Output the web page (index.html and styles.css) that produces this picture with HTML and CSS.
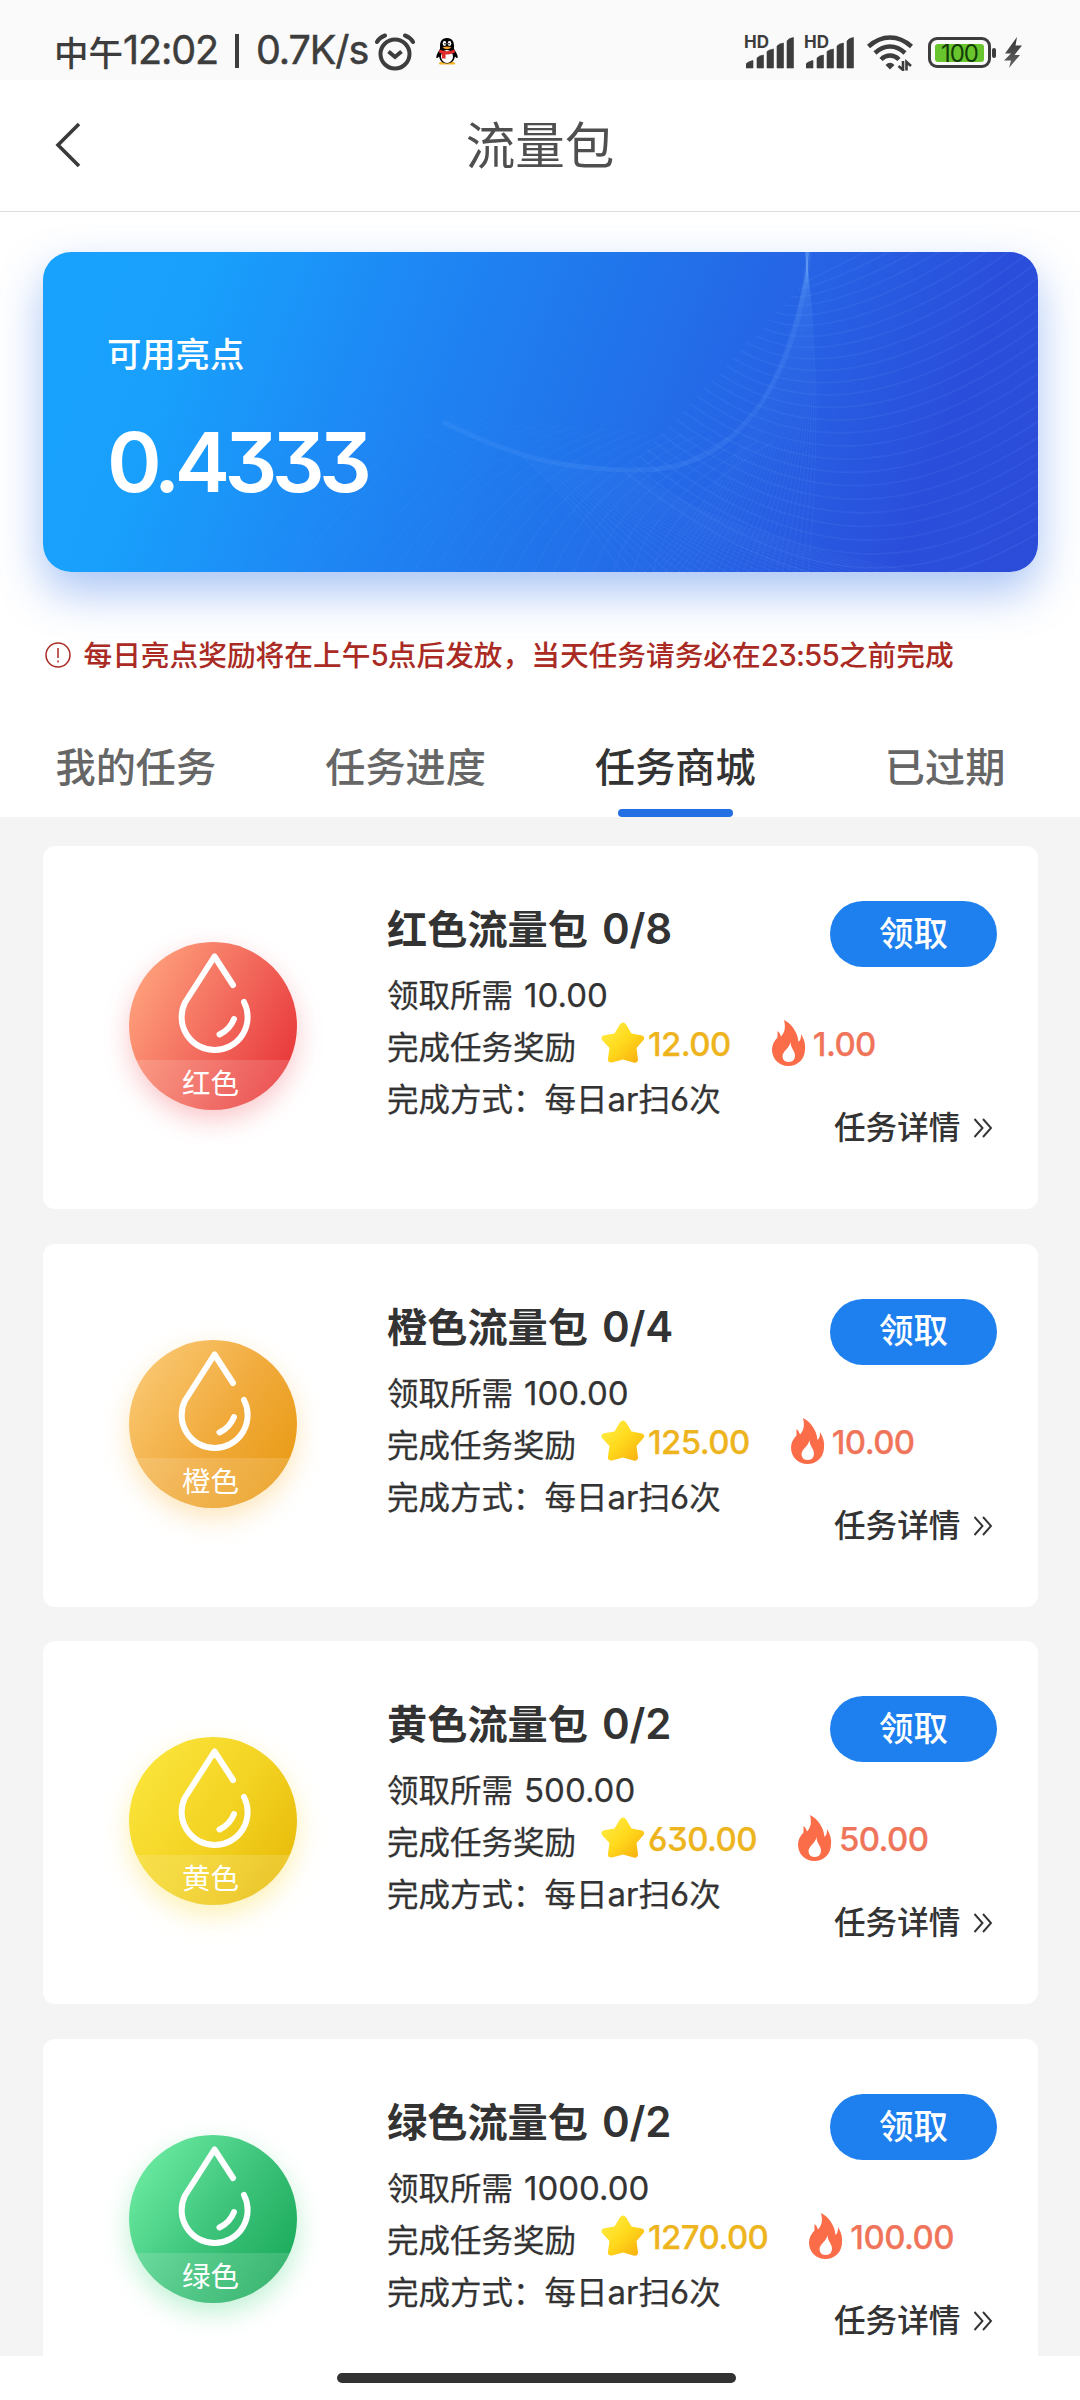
FILE: index.html
```html
<!DOCTYPE html>
<html lang="zh-CN">
<head>
<meta charset="utf-8">
<title>流量包</title>
<link rel="stylesheet" href="styles.css">
</head>
<body>
<svg class="defs" aria-hidden="true">
  <defs>
    <linearGradient id="starFill" x1="0" y1="0" x2="1" y2="1">
      <stop offset="0" stop-color="#fff04a"/><stop offset=".5" stop-color="#ffd91c"/><stop offset="1" stop-color="#f8a90c"/>
    </linearGradient>
    <linearGradient id="boltFill" x1="0" y1="0" x2="0" y2="1">
      <stop offset="0" stop-color="#333"/><stop offset="1" stop-color="#666"/>
    </linearGradient>
    <symbol id="drop" viewBox="0 0 168 168">
      <path d="M104 43 85.5 14.500 56 60.500A33 33 0 1 0 115 60M105 77Q101 87.500 90.500 92.500" fill="none" stroke="#fff" stroke-width="6" stroke-linecap="round" stroke-linejoin="round"/>
    </symbol>
    <symbol id="star" viewBox="0 0 44 42">
      <path d="M19 2.200Q22 -1.200 25 2.200L30.500 11.500 41 13.500Q44.500 15 42.500 18L35.500 26 37 37.500Q36.500 41.500 32.500 40.500L22 37.500 11 40.500Q6.500 41 7 36.500L8.500 26 1 18Q-.8 14.500 3 13.300L13.500 11.500Z" fill="url(#starFill)"/>
    </symbol>
    <symbol id="fire" viewBox="0 0 34 46">
      <path d="M12 0C20 4 26 13 26.500 22Q29.500 19 29 14Q34 22 33 30C32.500 40 25 46 16.500 46C7 46 0 39 0 29.500Q0 23 5.500 17.500V11Q8.500 13 9 16.500C13.500 12 13.500 6 12 0ZM18.500 22C17 29 10.500 31 10.500 36.500Q11 42 17 42Q23 41.500 23 35.500C23 31 18.500 28 18.500 22Z" fill="#fb6c48" fill-rule="evenodd"/>
    </symbol>
    <symbol id="more" viewBox="0 0 20 20">
      <path d="M1.500 1 9.500 10 1.500 19M10 1 18 10 10 19" fill="none" stroke="#333" stroke-width="1.900"/>
    </symbol>
    <symbol id="signal" viewBox="0 0 48 32">
      <path d="M0 31V27Q2 24.500 7 23.500V31ZM11 31V21Q13 18.500 17.500 18V31ZM21 31V14.500Q23 12.500 27.500 12V31ZM31 31V9Q33 6.500 37.500 6V31ZM41 31V4Q42.500 1 47.500.5V31Z" fill="#3d3d3d" stroke="#3d3d3d" stroke-width=".6" stroke-linejoin="round"/>
    </symbol>
  </defs>
</svg>

<div class="status">
  <span class="clock">中午<span class="lat">12:02</span><i class="bar"></i><span class="lat">0.7K/s</span></span>
  <svg class="alarm" viewBox="0 0 40 38" fill="none" stroke="#3d3d3d"><circle cx="20" cy="21" r="14.500" stroke-width="4"/><path d="M2 9Q4.500 4.500 10 2.500M30 2.500Q35.500 4.500 38 9" stroke-width="4" stroke-linecap="round"/><path d="M13.500 18.500 20 24 26.500 18.500" stroke-width="4"/></svg>
  <svg class="qq" viewBox="0 0 22 27"><path d="M3 25Q5 23 11 24.500Q17 23 19 25Q20 27 14 26.500H8Q2 27 3 25Z" fill="#f7b52c"/><path d="M11 0C5.500 0 4 4 4 8V11Q0 17 .3 19.500Q1 21 3 18.500Q4.500 25.500 11 25.500T19 18.500Q21 21 21.700 19.500Q22 17 18 11V8C18 4 16.500 0 11 0Z"/><ellipse cx="11" cy="18.500" rx="6" ry="6.500" fill="#fff"/><ellipse cx="8.500" cy="5.500" rx="1.800" ry="2.400" fill="#fff"/><ellipse cx="13.500" cy="5.500" rx="1.800" ry="2.400" fill="#fff"/><circle cx="9" cy="5.800" r=".8"/><circle cx="13" cy="5.800" r=".8"/><path d="M6.500 9.500Q11 7.500 15.500 9.500Q11 13 6.500 9.500Z" fill="#f6a52b"/><path d="M3.500 11.500Q11 15 18.500 11.500L19 14.500Q14.500 17 9.500 16.500V20.500H6V15.800L3 14.500Z" fill="#df2b2b"/></svg>
  <span class="cell"><b>HD</b><svg class="sig"><use href="#signal"/></svg></span>
  <span class="cell"><b>HD</b><svg class="sig"><use href="#signal"/></svg></span>
  <svg class="wifi" viewBox="0 0 46 36" fill="none" stroke="#3d3d3d" stroke-width="4.500"><path d="M1.500 11.500Q11.500 2.500 23 2.500T44.500 11.500M8 18Q15 11.500 23 11.500T38 18M14 24.500Q18 20.500 23 20.500T32 24.500"/><path d="M18.500 30Q23 25.500 27.500 30L23 34.500Z" fill="#3d3d3d" stroke="none"/><path d="M36 26V35L31.500 31M39.500 35.500V27L44 31" stroke-width="2.600"/></svg>
  <span class="battery"><span>100</span></span>
  <svg class="bolt" viewBox="0 0 18 31"><path d="M13 0 1 16.500H7L0 23.500H7L5 31 16 18H10.500L18 8.500H11.500Z" fill="url(#boltFill)"/></svg>
</div>

<header class="nav">
  <svg class="back" viewBox="0 0 26 46"><path d="M24 2 3 23 24 44" fill="none" stroke="#3a3a3a" stroke-width="3.600"/></svg>
  <h1>流量包</h1>
</header>

<section class="top">
  <div class="hero">
    <svg class="waves" viewBox="0 0 995 320"><g id="waves" fill="none" stroke="#7fb4ff"></g></svg>
    <p class="hero-label">可用亮点</p>
    <p class="hero-value">0.4333</p>
  </div>
  <p class="notice">
    <svg viewBox="0 0 26 26" fill="none" stroke="#a92b24" stroke-width="1.500"><circle cx="13" cy="13" r="12"/><path d="M13 6V16M13 18.500V20.500"/></svg>
    <span>每日亮点奖励将在上午<span class="lat">5</span>点后发放，当天任务请务必在<span class="lat">23:55</span>之前完成</span>
  </p>
  <nav class="tabs">
    <a>我的任务</a><a>任务进度</a><a class="on">任务商城</a><a>已过期</a>
  </nav>
</section>

<main class="list">
  <article class="card">
    <div class="badge red"><svg><use href="#drop"/></svg><span>红色</span></div>
    <div class="info">
      <h2>红色流量包 <span class="lat">0/8</span></h2>
      <p>领取所需 <span class="lat need">10.00</span></p>
      <p class="reward">完成任务奖励<svg class="star"><use href="#star"/></svg><span class="lat gold">12.00</span><svg class="fire"><use href="#fire"/></svg><span class="lat flame">1.00</span></p>
      <p>完成方式：每日<span class="lat">ar</span>扫<span class="lat">6</span>次</p>
    </div>
    <div class="side"><button>领取</button><a>任务详情<svg><use href="#more"/></svg></a></div>
  </article>
  <article class="card">
    <div class="badge orange"><svg><use href="#drop"/></svg><span>橙色</span></div>
    <div class="info">
      <h2>橙色流量包 <span class="lat">0/4</span></h2>
      <p>领取所需 <span class="lat need">100.00</span></p>
      <p class="reward">完成任务奖励<svg class="star"><use href="#star"/></svg><span class="lat gold">125.00</span><svg class="fire"><use href="#fire"/></svg><span class="lat flame">10.00</span></p>
      <p>完成方式：每日<span class="lat">ar</span>扫<span class="lat">6</span>次</p>
    </div>
    <div class="side"><button>领取</button><a>任务详情<svg><use href="#more"/></svg></a></div>
  </article>
  <article class="card">
    <div class="badge yellow"><svg><use href="#drop"/></svg><span>黄色</span></div>
    <div class="info">
      <h2>黄色流量包 <span class="lat">0/2</span></h2>
      <p>领取所需 <span class="lat need">500.00</span></p>
      <p class="reward">完成任务奖励<svg class="star"><use href="#star"/></svg><span class="lat gold">630.00</span><svg class="fire"><use href="#fire"/></svg><span class="lat flame">50.00</span></p>
      <p>完成方式：每日<span class="lat">ar</span>扫<span class="lat">6</span>次</p>
    </div>
    <div class="side"><button>领取</button><a>任务详情<svg><use href="#more"/></svg></a></div>
  </article>
  <article class="card">
    <div class="badge green"><svg><use href="#drop"/></svg><span>绿色</span></div>
    <div class="info">
      <h2>绿色流量包 <span class="lat">0/2</span></h2>
      <p>领取所需 <span class="lat need">1000.00</span></p>
      <p class="reward">完成任务奖励<svg class="star"><use href="#star"/></svg><span class="lat gold">1270.00</span><svg class="fire"><use href="#fire"/></svg><span class="lat flame">100.00</span></p>
      <p>完成方式：每日<span class="lat">ar</span>扫<span class="lat">6</span>次</p>
    </div>
    <div class="side"><button>领取</button><a>任务详情<svg><use href="#more"/></svg></a></div>
  </article>
</main>
<footer class="home"><i></i></footer>
<script src="waves.js"></script>
</body>
</html>
```
FILE: styles.css
```css
* { box-sizing: border-box; margin: 0; padding: 0; }
html, body { width: 1080px; height: 2400px; overflow: hidden; }
body {
  display: flex; flex-direction: column; background: #fff; color: #333;
  font-family: "Noto Sans CJK SC", sans-serif; font-weight: 400;
}
.defs { position: absolute; width: 0; height: 0; }
svg { display: block; flex: none; }
.lat { font-family: Inter, sans-serif; font-feature-settings: "cv09", "cv03"; font-size: 1.07em; line-height: 1; }

.status { height: 80px; flex: none; display: flex; align-items: flex-start; padding: 33px 58px 0 54px; background: #fafafa; color: #3d3d3d; }
.clock { display: flex; align-items: center; width: 321px; height: 36px; font-size: 34.500px; line-height: 36px; white-space: nowrap; font-weight: 500; }
.clock .lat { font-size: 39.500px; font-weight: 400; letter-spacing: -1.100px; -webkit-text-stroke: .5px #3d3d3d; }
.bar { width: 4px; height: 34px; margin: 0 17px; background: #3d3d3d; }
.alarm { width: 40px; height: 38px; }
.qq { width: 22px; height: 27px; margin: 5px 286px 0 21px; }
.cell { position: relative; width: 60px; height: 38px; padding: 4px 0 0 2px; }
.cell b { position: absolute; left: 0; top: 1px; font: 700 17px/17px Inter, sans-serif; }
.sig { width: 48px; height: 32px; }
.wifi { width: 46px; height: 36px; margin: 2px 15px 0 3px; }
.battery { position: relative; width: 63px; height: 31px; margin-top: 4px; padding: 4px 5px; border: 3px solid #3d3d3d; border-radius: 9px; }
.battery::after { content: ""; position: absolute; left: 61px; top: 8px; width: 4px; height: 10px; border-radius: 2px; background: #3d3d3d; }
.battery span { display: block; height: 18px; margin: -.5px -1px; border-radius: 3px; background: #68c52d; color: #123c08; font: 400 24px/19px Inter, sans-serif; letter-spacing: -1px; text-align: center; }
.bolt { width: 18px; height: 31px; margin: 4px 0 0 13px; }

.nav { position: relative; height: 132px; flex: none; display: flex; align-items: center; justify-content: center; padding-bottom: 5px; border-bottom: 1px solid #dedede; }
.back { position: absolute; left: 55px; top: 42px; width: 26px; height: 46px; }
.nav h1 { font-size: 49.500px; line-height: 60px; font-weight: 400; color: #4f4f4f; }

.top { height: 605px; flex: none; display: flex; flex-direction: column; padding: 40px 0 0; }
.hero { position: relative; width: 995px; height: 320px; margin-left: 43px; padding: 75px 64px 0; border-radius: 28px; color: #fff;
  background: linear-gradient(110deg, #18a1fd 0%, #18a0fc 15%, #1e87f4 35%, #2174eb 54%, #2663e5 70%, #2a4edb 87%, #2b4cd9 100%);
  box-shadow: 0 20px 46px rgba(50, 115, 230, .42); }
.waves { position: absolute; inset: 0; width: 995px; height: 320px; border-radius: 28px; }
.hero-label { position: relative; font-size: 34.300px; line-height: 50px; font-weight: 500; }
.hero-value { position: relative; margin-top: 35px; font: 600 83px/100px Inter, sans-serif; font-feature-settings: "cv09"; letter-spacing: -5.600px; }
.notice { display: flex; align-items: center; gap: 12.500px; height: 40px; margin: 63px 0 0 45px; font-size: 28.700px; line-height: 40px; font-weight: 500; color: #a92b24; white-space: nowrap; }
.notice span { margin-top: -2px; }
.notice svg { width: 26px; height: 26px; }
.notice .lat { font-size: 29.500px; letter-spacing: -.8px; }
.tabs { display: grid; grid-template-columns: repeat(4, 1fr); margin-top: auto; padding-left: 1px; height: 101px; }
.tabs a { display: flex; flex-direction: column; align-items: center; justify-content: space-between; font-size: 40.200px; line-height: 98px; font-weight: 500; color: #666; height: 101px; }
.tabs .on { color: #333; }
.tabs .on::after { content: ""; width: 115px; height: 8px; margin-top: -8px; flex: none; border-radius: 4px; background: #236fe3; }

.list { height: 1539px; flex: none; display: flex; flex-direction: column; gap: 34.700px; padding: 29px 42px 0 43px; background: #f4f4f4; overflow: hidden; }
.card { height: 363px; flex: none; display: flex; padding: 55px 41px 0 86px; background: #fff; border-radius: 12px; }
.badge { width: 168px; height: 168px; margin-top: 41px; flex: none; border-radius: 50%; display: grid; grid-template: 118px 50px / 168px; }
.badge svg { width: 168px; height: 168px; grid-area: 1 / 1; }
.badge span { grid-area: 2 / 1; height: 50px; padding-right: 5px; background: rgba(255, 255, 255, .14); color: #fff; font-size: 28.500px; line-height: 43px; text-align: center; font-weight: 400; clip-path: circle(84px at 84px -34px); }
.red { background: linear-gradient(118deg, #ffa37d 8%, #f2695c 52%, #e93a3b 88%); box-shadow: 0 10px 26px rgba(240, 80, 90, .32); }
.orange { background: linear-gradient(125deg, #fac873 8%, #f1ab3d 52%, #ea9c17 88%); box-shadow: 0 10px 26px rgba(250, 185, 70, .36); }
.yellow { background: linear-gradient(125deg, #fbe53b 8%, #f3d323 52%, #e9bd0b 88%); box-shadow: 0 10px 26px rgba(250, 220, 70, .4); }
.green { background: linear-gradient(125deg, #72f0a7 4%, #3fc57c 50%, #1cab5c 88%); box-shadow: 0 10px 26px rgba(70, 215, 130, .34); }
.info { width: 443px; margin: -2px 0 0 90px; flex: none; white-space: nowrap; }
.info h2 { height: 56px; font-size: 40.200px; line-height: 56px; font-weight: 700; color: #333; }
.info h2 .lat { font-weight: 600; font-size: 42px; margin-left: 5px; letter-spacing: -.2px; }
.info p { height: 52px; font-size: 31.500px; line-height: 52px; color: #333; -webkit-text-stroke: .25px; }
.info h2 + p { margin-top: 12px; }
.info p .lat { font-size: 33px; line-height: 1; }
.info p .need { margin-left: 4px; }
.info .reward { display: flex; align-items: center; }
.star { width: 44px; height: 42px; margin: -4px 3px 0 25px; }
.fire { width: 34px; height: 46px; margin: -4px 7px 0 41px; }
.reward .lat { margin-top: -1px; font-weight: 500; letter-spacing: -.6px; }
.info .gold { color: #edb41d; }
.info .flame { color: #f0745a; }
.side { width: 167px; display: flex; flex-direction: column; }
.side button { width: 167px; height: 66px; border: 0; border-radius: 33px; background: #1e80ef; color: #fff; font: 500 34.500px/58px "Noto Sans CJK SC", sans-serif; padding: 0 0 7px; }
.side a { display: flex; align-items: center; justify-content: space-between; margin-top: 134px; padding: 0 4px; height: 48px; font-size: 31.600px; line-height: 48px; font-weight: 500; white-space: nowrap; }
.side a svg { width: 20px; height: 20px; margin-top: 6px; }

.home { flex: 1; display: flex; justify-content: center; padding-top: 17px; padding-right: 7px; background: #fff; }
.home i { width: 399px; height: 10px; border-radius: 5px; background: #323232; }
```
FILE: waves.js
```js
// Fine line families that fan out from the crest of the balance card.
const group = document.getElementById('waves');
const line = (d, opacity, width) => {
  const p = document.createElementNS('http://www.w3.org/2000/svg', 'path');
  p.setAttribute('d', d);
  p.setAttribute('stroke-opacity', opacity);
  p.setAttribute('stroke-width', width);
  group.append(p);
};
line('M400 170C470 205 520 218 597 218C700 218 755 120 766 0', .12, 5);
for (let i = 0; i < 26; i++) {
  const t = i / 25;
  line(`M${110 + t * 500} 322Q${230 + t * 390} ${165 + t * 90} ${350 + t * 380} ${160 + t * 30}`, .03 + t * .05, 1.5);
  line(`M${480 + t * 110} ${205 + t * 14}Q${540 + t * 130} ${260 + t * 20} ${580 + t * 300} 322`, .08, 1.3);
  line(`M${766 - t * 4} 0C${755 + t * 22} ${90 + t * 10} ${700 + t * 75} 220 ${600 + t * 165} 322`, .07, 1.3);
  line(`M${762 - t * 180} ${30 + t * 190}C${780 - t * 20} ${20 + t * 340} ${880} ${-20 + t * 370} 997 ${-120 + t * 400}`, .09, 1.8);
}
```
